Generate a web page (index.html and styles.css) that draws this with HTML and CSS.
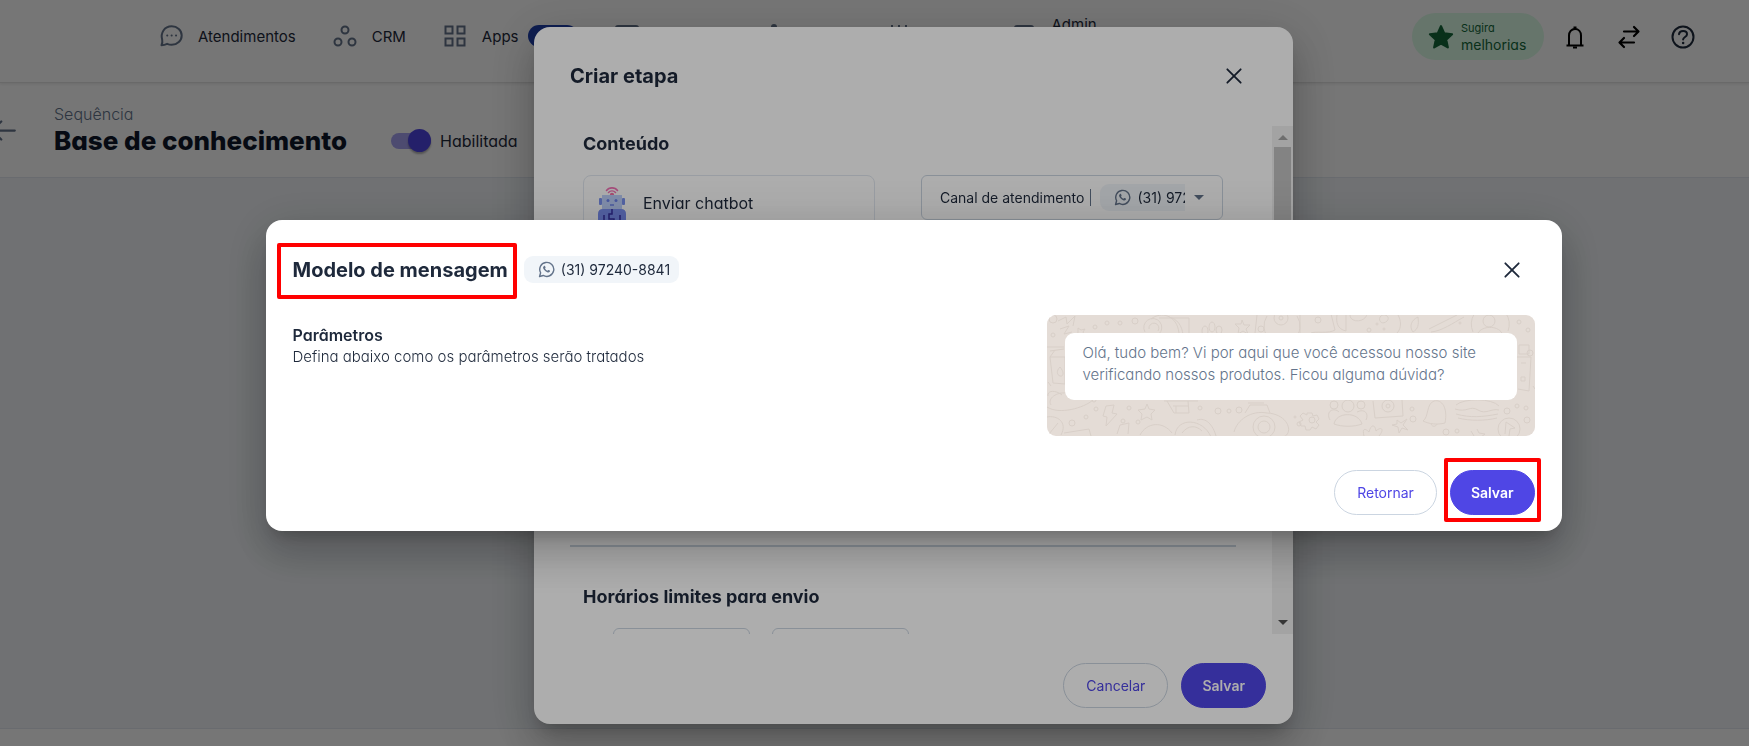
FILE: index.html
```
<!DOCTYPE html>
<html lang="pt-BR">
<head>
<meta charset="UTF-8">
<meta name="viewport" content="width=device-width, initial-scale=1.0">
<title>Base de conhecimento</title>
<link rel="stylesheet" href="styles.css">
</head>
<body>
<svg width="0" height="0" class="sprite" aria-hidden="true">
    <symbol id="whatsapp" viewBox="0 0 24 24">
        <path d="M2.2 21.8l1.500-5.200A9.900 9.900 0 1 1 7.400 20.400z" fill="none" stroke="currentColor" stroke-width="2" stroke-linejoin="round"/>
        <path d="M8.600 7c.5-.4 1.100-.3 1.400.3l.7 1.600c.2.5-.5 1.300-.8 1.600.8 1.500 2 2.600 3.500 3.300.4-.4 1-1.400 1.500-1.200l1.800.9c.5.300.4 1-.1 1.700-.8 1-2.200 1.200-3.600.7-2.700-1-4.700-3-5.700-5.500-.4-1.200 0-2.500 1.300-3.400z" fill="currentColor"/>
    </symbol>
    <symbol id="close" viewBox="0 0 24 24">
        <path d="M4 4l16 16M20 4l-16 16" fill="none" stroke="currentColor" stroke-width="2.200" stroke-linecap="round"/>
    </symbol>
</svg>

<div class="page">
    <header class="topbar">
        <nav class="nav">
            <a href="#" class="nav-item">
                <svg viewBox="0 0 24 24" width="24" height="24" fill="none" stroke="currentColor" stroke-width="2" stroke-linecap="round" stroke-linejoin="round"><path d="M2.500 21.200c.9-1.800 1.100-3.400.7-5.300C1.200 9 5.400 2.300 12.700 2.300c5.600 0 10 4 10 9.100s-4.400 9.400-10 9.400c-1.700 0-3.200-.4-4.600-1-1.700.8-3.500 1.300-5.600 1.400z"/><path d="M8.200 11.400h.1M12.600 11.400h.1M17 11.400h.1"/></svg>
                Atendimentos
            </a>
            <a href="#" class="nav-item">
                <svg viewBox="0 0 24 24" width="24" height="24" fill="none" stroke="currentColor" stroke-width="2"><circle cx="12" cy="6" r="3.500"/><circle cx="5" cy="18" r="3.500"/><circle cx="19" cy="18" r="3.500"/></svg>
                CRM
            </a>
            <a href="#" class="nav-item apps">
                <svg viewBox="0 0 24 24" width="24" height="24" fill="none" stroke="currentColor" stroke-width="2"><path d="M2.500 2.500h7v7h-7zM14.500 2.500h7v7h-7zM2.500 14.500h7v7h-7zM14.500 14.500h7v7h-7z"/></svg>
                Apps
                <span class="badge"></span>
            </a>
            <a href="#" class="nav-item wide" aria-label="Contatos">
                <svg viewBox="0 0 24 24" width="24" height="24" fill="none" stroke="currentColor" stroke-width="2"><rect x="1" y="2" width="22" height="19" rx="2"/></svg>
            </a>
            <a href="#" class="nav-item mid" aria-label="Chatbot">
                <svg viewBox="0 0 24 24" width="24" height="24" fill="currentColor"><circle cx="12" cy="3" r="3"/></svg>
            </a>
            <a href="#" class="nav-item mid" aria-label="Agenda">
                <svg viewBox="0 0 24 24" width="24" height="24" fill="none" stroke="currentColor" stroke-width="2"><path d="M5 1v4M12 1v4M19 1v4"/></svg>
            </a>
            <a href="#" class="nav-item admin">
                <svg viewBox="0 0 24 24" width="24" height="24" fill="none" stroke="currentColor" stroke-width="2"><rect x="3" y="2" width="18" height="19" rx="2"/></svg>
                <span class="admin-label">Admin</span>
            </a>
        </nav>
        <div class="actions">
            <button class="suggest">
                <svg viewBox="0 0 24 24" width="26" height="26" fill="currentColor" stroke="currentColor" stroke-width="2" stroke-linejoin="round"><path d="M12 2l3 6.700 7.200.8-5.400 4.900 1.500 7.200L12 18l-6.300 3.600 1.500-7.200L1.800 9.500 9 8.700z"/></svg>
                <span class="suggest-text"><small>Sugira</small>melhorias</span>
            </button>
            <button class="icon-btn" aria-label="Notificações">
                <svg viewBox="0 0 24 24" width="24" height="24" fill="none" stroke="currentColor" stroke-width="2"><path d="M3.500 20.500h17M6 20v-9.500c0-3.600 2.400-6.500 6-6.500s6 2.900 6 6.500V20"/><path d="M12 4V1.500" stroke-width="3"/><path d="M10 22.500h4" stroke-width="2"/></svg>
            </button>
            <button class="icon-btn" aria-label="Trocar conta">
                <svg viewBox="0 0 24 24" width="24" height="24" fill="none" stroke="currentColor" stroke-width="2.200" stroke-linecap="round" stroke-linejoin="round"><path d="M7 6.500h14M17 2l4.500 4.500L17 11M17 17.500H3M7 13l-4.500 4.500L7 22"/></svg>
            </button>
            <button class="icon-btn help" aria-label="Ajuda">
                <svg viewBox="0 0 24 24" width="24" height="24" fill="none" stroke="currentColor" stroke-width="2" stroke-linecap="round"><circle cx="12" cy="12" r="10.500"/><path d="M8 9.200c.3-2 1.900-3.200 4.100-3.200 2.300 0 3.900 1.300 3.900 3.200 0 2.800-3.900 2.700-3.900 5.300"/><path d="M12.100 18h.1" stroke-width="2.400"/></svg>
            </button>
        </div>
    </header>

    <section class="subheader">
        <button class="back" aria-label="Voltar">
            <svg viewBox="0 0 24 24" width="27" height="27" fill="none" stroke="currentColor" stroke-width="2" stroke-linecap="round" stroke-linejoin="round"><path d="M22 12H2M10 4l-8 8 8 8"/></svg>
        </button>
        <div class="heading">
            <p class="overline">Sequência</p>
            <h1>Base de conhecimento</h1>
        </div>
        <label class="toggle">
            <input type="checkbox" role="switch" checked>
            Habilitada
        </label>
    </section>

    <main class="canvas"></main>
    <footer class="page-footer"></footer>
</div>

<div class="overlay">
    <div class="dialog step-dialog" role="dialog" aria-label="Criar etapa">
        <div class="step-header">
            <h2>Criar etapa</h2>
            <button class="close" aria-label="Fechar"><svg width="20" height="20"><use href="#close"/></svg></button>
        </div>
        <div class="step-body">
            <div class="step-content">
                <section class="content-section">
                    <h3>Conteúdo</h3>
                    <div class="content-row">
                        <button class="option">
                            <svg class="robot" viewBox="0 0 28 48" width="28" height="48">
                                <path d="M8.500 4.500c2.500-3.500 8.500-3.500 11 0M10.500 6.500c2-2 5-2 7 0" fill="none" stroke="#f472b6" stroke-width="1.600" stroke-linecap="round"/>
                                <circle cx="14" cy="9" r="2.200" fill="#f472a6"/>
                                <rect x="4" y="9" width="20" height="14" fill="#bfd0fb"/>
                                <rect x="1" y="12" width="3" height="7" rx="1" fill="#7b93f0"/>
                                <rect x="24" y="12" width="3" height="7" rx="1" fill="#7b93f0"/>
                                <circle cx="10" cy="14.500" r="1.500" fill="#6b82ea"/>
                                <circle cx="18" cy="14.500" r="1.500" fill="#6b82ea"/>
                                <path d="M12 19h4" stroke="#6b82ea" stroke-width="1.500"/>
                                <path d="M0 48V28q0-5 5-5h18q5 0 5 5v20z" fill="#7b8ff2"/>
                                <path d="M6 48V29M22 48V29M14 23v5h-3v5h5v6" fill="none" stroke="#3730a3" stroke-width="1.500"/>
                            </svg>
                            Enviar chatbot
                        </button>
                        <button class="channel">
                            <span class="channel-label">Canal de atendimento</span>
                            <span class="channel-value"><span class="chip"><svg width="17" height="17"><use href="#whatsapp"/></svg>(31) 97240-8841</span></span>
                            <span class="caret"></span>
                        </button>
                    </div>
                </section>
                <section class="hours-section">
                    <h3 class="alt">Horários limites para envio</h3>
                    <div class="hours">
                        <input type="text" aria-label="Início">
                        <input type="text" aria-label="Fim">
                    </div>
                </section>
            </div>
            <div class="scrollbar"><span class="up"></span><span class="thumb"></span><span class="down"></span></div>
        </div>
        <div class="step-footer">
            <button class="btn">Cancelar</button>
            <button class="btn primary">Salvar</button>
        </div>
    </div>
</div>

<div class="overlay">
    <div class="dialog template-dialog" role="dialog" aria-label="Modelo de mensagem">
        <div class="template-header">
            <h2 class="marked">Modelo de mensagem</h2>
            <span class="chip"><svg width="17" height="17"><use href="#whatsapp"/></svg>(31) 97240-8841</span>
            <button class="close" aria-label="Fechar"><svg width="20" height="20"><use href="#close"/></svg></button>
        </div>
        <div class="template-body">
            <div class="params">
                <h4>Parâmetros</h4>
                <p>Defina abaixo como os parâmetros serão tratados</p>
            </div>
            <div class="preview">
                <svg class="doodles" viewBox="0 0 488 121" preserveAspectRatio="xMidYMid slice" aria-hidden="true">
                    <!-- top strip -->
                    <path d="M11 6l8-4 1 7 8-8-2 10M13 14l9-3-5 8 8-2M31 13l3 2 4-1-2 3 2 4-4-2-4 2 1-4z"/>
                    <circle cx="6" cy="4" r="4"/><circle cx="6" cy="20" r="2"/><circle cx="48" cy="12" r="2"/><circle cx="60" cy="8" r="2"/><circle cx="73" cy="8" r="2"/><circle cx="88" cy="6" r="3"/>
                    <path d="M98 17a9 9 0 1 1 14 2M102 14a5 5 0 1 1 9 2M112 3h30v18M104 4c10-8 26-4 28 14M122 2c8 2 13 8 14 18"/>
                    <ellipse cx="158" cy="16" rx="3" ry="5"/><ellipse cx="165" cy="12" rx="3" ry="5"/><ellipse cx="172" cy="15" rx="3" ry="4"/>
                    <path d="M195 5l2 5 6 0-4 4 2 5-5-3-5 3 1-6-4-4 6 0z"/>
                    <path d="M210 0l-2 18M220 1a18 18 0 1 0 30 0M253 0v18M264 18c4-2 18 1 24-3l-4-16M290 0c-1 7 0 14 9 16V0"/>
                    <circle cx="234" cy="3" r="7"/><circle cx="234" cy="3" r="2"/><circle cx="214" cy="14" r="3"/><circle cx="271" cy="5" r="3"/>
                    <path d="M303 0c0 8 15 8 17-1M333 2c4-5 11 0 7 4s-9 1-7-4M351 0c3 5 4 13-1 18M366 17c-4-5-2-12 5-15 1 8 0 12-5 15M382 14l28-14M384 17c11-1 22-9 33-15"/>
                    <circle cx="322" cy="15" r="2"/><circle cx="330" cy="9" r="1"/><circle cx="337" cy="14" r="1"/><circle cx="413" cy="8" r="1"/>
                    <path d="M426 17a19 19 0 1 1 35-1M431 18c4-7 19-8 24 0"/><circle cx="442" cy="6" r="6"/><circle cx="472" cy="7" r="2"/><circle cx="481" cy="15" r="2"/>
                    <!-- side edges -->
                    <path d="M0 32h17M3 36l14-2M3 42h15v27l-12-1zM3 42l5-7M13 52c-4 4-3 8 0 9s5-3 0-9M1 67l3 4M1 81c-1-6 8-6 14-1"/>
                    <path d="M472 30h10v9h-10zM470 42h14l-2 34-11-2M474 48h5M474 62h4v4h-4zM486 71l2 3"/><circle cx="483" cy="38" r="3"/>
                    <!-- bottom strip -->
                    <path d="M0 92c12 8 37 1 46-7M4 90c-4-7 6-13 15-12M59 91l8-1-2 8 5 1-11 12 1-9-4-1zM100 89l2 5 6 1-4 4 1 6-5-3-6 3 1-6-4-4 7-1z"/>
                    <path d="M120 86l7 12h15l-1-12M126 91h15M129 91v7M117 86h34"/>
                    <circle cx="25" cy="108" r="3"/><circle cx="39" cy="102" r="2"/><circle cx="49" cy="94" r="2"/><circle cx="47" cy="85" r="2"/><circle cx="76" cy="106" r="2"/><circle cx="82" cy="93" r="2"/><circle cx="91" cy="107" r="2"/><circle cx="153" cy="93" r="2"/><circle cx="171" cy="96" r="3"/><circle cx="182" cy="96" r="2"/><circle cx="192" cy="95" r="3"/>
                    <path d="M0 102c10-2 21 5 14 18M2 119l9-11M17 118l25-4 2 7M70 119l3-9 9-2-1 11M93 120c7-13 23-14 32-2M128 120c2-18 28-17 36 2M135 118c6-8 14-8 20-2M150 105c9-3 16 5 19 16"/>
                    <path d="M187 117c3-12 17-22 33-19 22 1 27 21 16 24M198 98l5-8h17l3 8M201 88h16"/><circle cx="217" cy="112" r="11"/><circle cx="217" cy="112" r="6"/><circle cx="248" cy="102" r="1"/><circle cx="252" cy="109" r="2"/>
                    <path d="M260 98h5l1 3 4-1 2 4-3 3 3 3-3 4-4-2-2 3h-4l-1-4-4 0-2-4 4-2-3-4 3-3 4 2z"/><circle cx="265" cy="105" r="3"/>
                    <path d="M283 105c-5-9 4-13 9-8M287 109c2-12 24-13 28 0M310 97c8-4 12 2 9 8M287 109c8 3 20 3 28 0"/><circle cx="301" cy="91" r="6"/><circle cx="287" cy="90" r="4"/><circle cx="314" cy="90" r="4"/>
                    <path d="M326 86l2 17 28-2-1-16"/><circle cx="341" cy="91" r="6"/><circle cx="341" cy="91" r="2"/>
                    <path d="M317 121c-2-8 1-8 5-4 2-8 6-8 7-1 5-5 9-2 3 5M350 105l4 3 6-4-4 6 5 5-6-2-3 5-1-6-6-2 5-1zM376 106c6-4 3-17 11-20 8-2 14 7 11 22-8 2-16 1-22-2zM384 109c1 3 5 3 6 0"/>
                    <path d="M409 90c8-7 36-7 43 1M408 94c12 4 15-4 23 1s13-2 21 0M409 99c14 4 27 3 42 0M411 103c12 3 27 3 39 0M424 116l3 5M430 114l2 4 6 1-4 3"/>
                    <circle cx="365" cy="94" r="2"/><circle cx="366" cy="104" r="3"/><circle cx="399" cy="117" r="3"/><circle cx="410" cy="116" r="2"/><circle cx="460" cy="96" r="3"/><circle cx="470" cy="91" r="2"/><circle cx="479" cy="93" r="2"/><circle cx="480" cy="105" r="3"/>
                    <circle cx="462" cy="114" r="11"/><path d="M458 119l1-12 9 6-5 1-1 7"/>
                </svg>
                <p class="bubble">Olá, tudo bem? Vi por aqui que você acessou nosso site verificando nossos produtos. Ficou alguma dúvida?</p>
            </div>
        </div>
        <div class="template-footer">
            <button class="btn">Retornar</button>
            <span class="marked-btn"><button class="btn primary">Salvar</button></span>
        </div>
    </div>
</div>
</body>
</html>
```
FILE: styles.css
```
* {
    box-sizing: border-box;
}
body {
    margin: 0;
    font-family: Inter, "Liberation Sans", sans-serif;
    font-size: 16px;
    color: #1e293b;
    overflow: hidden;
}
h1, h2, h3, h4, p {
    margin: 0;
}
button {
    font: inherit;
    color: inherit;
    background: none;
    border: none;
    padding: 0;
    cursor: pointer;
}
svg {
    display: block;
    flex: none;
}
.sprite {
    position: absolute;
}

/* page */
.page {
    height: 100vh;
    display: flex;
    flex-direction: column;
    background: #f1f5f9;
}
.topbar {
    flex: none;
    height: 83px;
    display: flex;
    align-items: flex-start;
    justify-content: space-between;
    padding: 12px 54px 0 159px;
    background: #fff;
    border-bottom: 1px solid #e2e2e2;
    box-shadow: 0 1px 3px rgba(0,0,0,0.1);
    position: relative;
}
.nav {
    display: flex;
    align-items: center;
    gap: 37px;
    height: 48px;
}
.nav-item {
    display: flex;
    align-items: center;
    gap: 15px;
    height: 24px;
    font-size: 15px;
    color: #1e293b;
    text-decoration: none;
}
.nav-item svg {
    color: #64748b;
}
.badge {
    width: 50px;
    height: 22px;
    border-radius: 11px;
    background: #1e40af;
    margin-left: -5px;
}
.wide {
    width: 110px;
}
.mid {
    width: 88px;
}
.admin-label {
    height: 42px;
    line-height: 20px;
}
.actions {
    display: flex;
    align-items: center;
    gap: 30px;
    height: 49px;
    color: #000;
}
.suggest {
    display: flex;
    align-items: center;
    gap: 7px;
    width: 132px;
    height: 47px;
    margin-right: -11px;
    padding-left: 16px;
    border-radius: 24px;
    background: #dcfce7;
    color: #14693a;
    text-align: left;
}
.suggest-text {
    font-size: 14px;
    line-height: 17px;
    font-feature-settings: "cv11";
}
.suggest-text small {
    display: block;
    font-size: 11px;
    line-height: 16px;
}
.help {
    color: #1e293b;
}

.subheader {
    flex: none;
    height: 95px;
    display: flex;
    align-items: center;
    background: #fff;
    border-bottom: 1px solid #e2e8f0;
    font-feature-settings: "cv11";
}
.back {
    margin-left: -10px;
    margin-right: 37px;
    color: #64748b;
}
.overline {
    font-size: 16px;
    font-weight: 300;
    line-height: 22px;
    color: #64748b;
}
h1 {
    font-size: 26px;
    line-height: 32px;
    font-weight: 800;
    color: #0f172a;
}
.toggle {
    display: flex;
    align-items: center;
    align-self: flex-end;
    gap: 9px;
    margin-left: 44px;
    margin-bottom: 26px;
}
.toggle input {
    appearance: none;
    position: relative;
    width: 40px;
    height: 16px;
    margin: 0;
    border-radius: 8px;
    background: #a7a3f1;
}
.toggle input::after {
    content: "";
    position: absolute;
    right: 0;
    top: -4px;
    width: 23px;
    height: 23px;
    border-radius: 50%;
    background: #4f46e5;
    box-shadow: 0 2px 2px rgba(0,0,0,0.3);
}
.canvas {
    flex: 1;
}
.page-footer {
    flex: none;
    height: 18px;
    background: #fff;
    border-top: 1px solid #e2e8f0;
}

/* dialogs */
.overlay {
    position: fixed;
    inset: 0;
    display: flex;
    align-items: center;
    justify-content: center;
    padding: 5px 0 0 78px;
    background: rgba(0,0,0,0.32);
}
.dialog {
    background: #fff;
    border-radius: 16px;
    box-shadow: 0 11px 15px -7px rgba(0,0,0,0.2), 0 24px 38px 3px rgba(0,0,0,0.14), 0 9px 46px 8px rgba(0,0,0,0.12);
}
h2 {
    font-size: 20px;
    line-height: 28px;
    font-weight: 700;
}
h3 {
    font-size: 18px;
    line-height: 27px;
    font-weight: 700;
}
.alt {
    font-feature-settings: "cv11";
}
.close {
    padding: 8px;
    margin-left: auto;
}
.btn {
    height: 45px;
    padding: 0 22px;
    border: 1px solid #cbd5e1;
    border-radius: 23px;
    font-size: 14px;
    color: #4f46e5;
}
.primary {
    padding: 0 20px;
    background: #4f46e5;
    border-color: #4f46e5;
    color: #fff;
    font-weight: 600;
}
.chip {
    display: inline-flex;
    align-items: center;
    gap: 6px;
    height: 27px;
    padding: 0 9px 0 14px;
    border-radius: 9px;
    background: #f1f5f9;
    font-size: 14px;
    white-space: nowrap;
}
.chip svg {
    color: #64748b;
}

.step-dialog {
    display: flex;
    flex-direction: column;
    width: 759px;
    max-width: 90%;
    height: calc(100vh - 49px);
}
.step-header {
    flex: none;
    height: 99px;
    display: flex;
    align-items: center;
    padding: 0 41px 2px 36px;
}
.step-body {
    flex: 1;
    min-height: 0;
    display: flex;
}
.step-content {
    flex: 1;
    padding: 0 36px;
    overflow: hidden;
}
.content-section {
    height: 421px;
    padding: 4px 13px 0;
    border-bottom: 2px solid #cbd5e1;
}
.content-row {
    display: grid;
    grid-template-columns: 292px 302px;
    justify-content: space-between;
    align-items: start;
    margin-top: 18px;
}
.option {
    display: flex;
    align-items: center;
    gap: 17px;
    height: 72px;
    padding: 0 14px 16px;
    border: 1px solid #e2e8f0;
    border-radius: 8px;
    font-feature-settings: "cv11";
    overflow: hidden;
}
.option .robot {
    align-self: flex-start;
    margin-top: 10px;
}
.channel {
    display: flex;
    align-items: center;
    height: 45px;
    padding: 0 18px;
    border: 1px solid #cbd5e1;
    border-radius: 6px;
    font-size: 14px;
}
.channel-label {
    padding-right: 6px;
    border-right: 1px solid #64748b;
    white-space: nowrap;
}
.channel-value {
    flex: 1;
    min-width: 0;
    display: flex;
    margin: 0 9px;
    overflow: hidden;
}
.caret {
    border: 5px solid transparent;
    border-top-color: #64748b;
    border-bottom: 0;
}
.hours-section {
    padding: 36px 13px 0;
}
.hours {
    display: flex;
    gap: 22px;
    margin: 18px 0 0 30px;
}
.hours input {
    width: 137px;
    height: 45px;
    border: 1px solid #cbd5e1;
    border-radius: 6px;
}
.scrollbar {
    width: 21px;
    display: flex;
    flex-direction: column;
    align-items: center;
    padding: 9px 0;
    background: #f1f1f1;
}
.up {
    border: 5px solid transparent;
    border-bottom-color: #a3a3a3;
    border-top: 0;
}
.thumb {
    width: 17px;
    height: 200px;
    margin: 7px 0 auto;
    background: #c1c1c1;
}
.down {
    border: 5px solid transparent;
    border-top-color: #505050;
    border-bottom: 0;
}
.step-footer {
    flex: none;
    height: 90px;
    display: flex;
    align-items: center;
    justify-content: flex-end;
    gap: 13px;
    padding: 13px 27px 0;
}

.template-dialog {
    width: 1296px;
    max-width: 90%;
}
.template-header {
    display: flex;
    align-items: center;
    padding: 23px 32px 16px 11px;
}
.template-header .chip,
.template-header .close {
    margin-bottom: 3px;
}
.marked {
    padding: 9px 5px 11px 12px;
    border: 4px solid #f00;
    border-radius: 2px;
    margin-right: 7px;
}
.template-body {
    display: flex;
    justify-content: space-between;
    padding: 0 27px;
}
.params {
    padding-top: 9px;
    font-size: 15px;
    font-weight: 300;
    line-height: 22px;
    font-feature-settings: "cv11";
}
h4 {
    font-size: 16px;
    font-weight: 600;
}
.preview {
    position: relative;
    width: 488px;
    height: 121px;
    padding: 18px;
    border-radius: 9px;
    background: #e4dcd6;
    overflow: hidden;
}
.doodles {
    position: absolute;
    inset: 0;
    width: 100%;
    height: 100%;
    fill: none;
    stroke: #d8cfc8;
    stroke-width: 1;
}
.bubble {
    position: relative;
    padding: 9px 18px 14px;
    border-radius: 9px;
    background: #fff;
    color: #64748b;
    font-size: 15px;
    font-weight: 300;
    line-height: 22px;
    font-feature-settings: "cv11";
}
.template-footer {
    display: flex;
    align-items: flex-end;
    justify-content: flex-end;
    gap: 7px;
    padding: 22px 21px 9px;
}
.template-footer > .btn {
    margin-bottom: 7px;
}
.marked-btn {
    padding: 8px 2px 3px;
    border: 4px solid #f00;
    border-radius: 2px;
}
```
